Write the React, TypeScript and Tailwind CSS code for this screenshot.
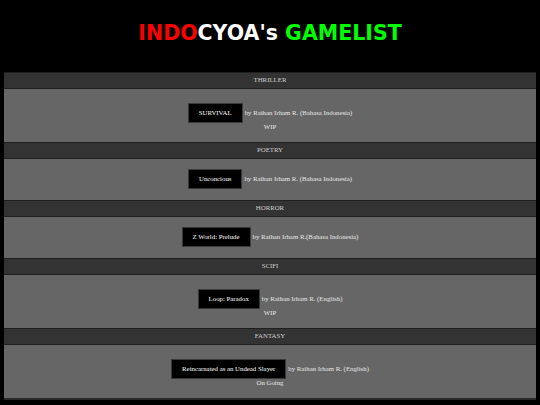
import React from "react";

type Game = {
  title: string;
  by: string;
  status?: string;
};

type Genre = {
  name: string;
  game: Game;
};

const GENRES: Genre[] = [
  { name: "THRILLER", game: { title: "SURVIVAL", by: "by Raihan Irham R. (Bahasa Indonesia)", status: "WIP" } },
  { name: "POETRY", game: { title: "Unconcious", by: "by Raihan Irham R. (Bahasa Indonesia)" } },
  { name: "HORROR", game: { title: "Z World: Prelude", by: "by Raihan Irham R.(Bahasa Indonesia)" } },
  { name: "SCIFI", game: { title: "Loop: Paradox", by: "by Raihan Irham R. (English)", status: "WIP" } },
  { name: "FANTASY", game: { title: "Reincarnated as an Undead Slayer", by: "by Raihan Irham R. (English)", status: "On Going" } },
];

const serif = "font-['Liberation_Serif','Times_New_Roman',serif]";

const GenreSection = ({ genre }: { genre: Genre }) => {
  const { game } = genre;
  return (
    <section>
      <div className="h-[17px] flex items-center justify-center bg-[#333333] border-y border-[#1f1f1f] text-[6.8px] text-[#cfcfcf]">
        {genre.name}
      </div>
      <div className={game.status ? "bg-[#666666] pt-[14px] pb-[12px]" : "bg-[#666666] pt-[10px] pb-[11px]"}>
        <div className="flex items-center justify-center gap-[2px]">
          <a className="h-[20px] px-[10px] flex items-center bg-black border border-[#3a3a3a] text-white text-[6.8px] whitespace-nowrap">
            {game.title}
          </a>
          <span className="text-[6.8px] text-[#e6e6e6] whitespace-nowrap">{game.by}</span>
        </div>
        {game.status && (
          <div className="h-[7px] leading-[7px] text-center text-[6.8px] text-[#e6e6e6]">{game.status}</div>
        )}
      </div>
    </section>
  );
};

export default function App() {
  return (
    <div className={`w-[540px] h-[405px] bg-black overflow-hidden ${serif}`}>
      <header className="h-[72px] flex items-center justify-center pb-[6px]">
        <h1 className="font-['DejaVu_Sans',Verdana,sans-serif] font-bold text-[20.5px]">
          <span className="text-[#ff0000]">INDO</span>
          <span className="text-white">CYOA's </span>
          <span className="text-[#00ff00]">GAMELIST</span>
        </h1>
      </header>
      <main className="mx-[4px] border-b-2 border-[#2a2a2a]">
        {GENRES.map((g) => (
          <GenreSection key={g.name} genre={g} />
        ))}
      </main>
    </div>
  );
}
